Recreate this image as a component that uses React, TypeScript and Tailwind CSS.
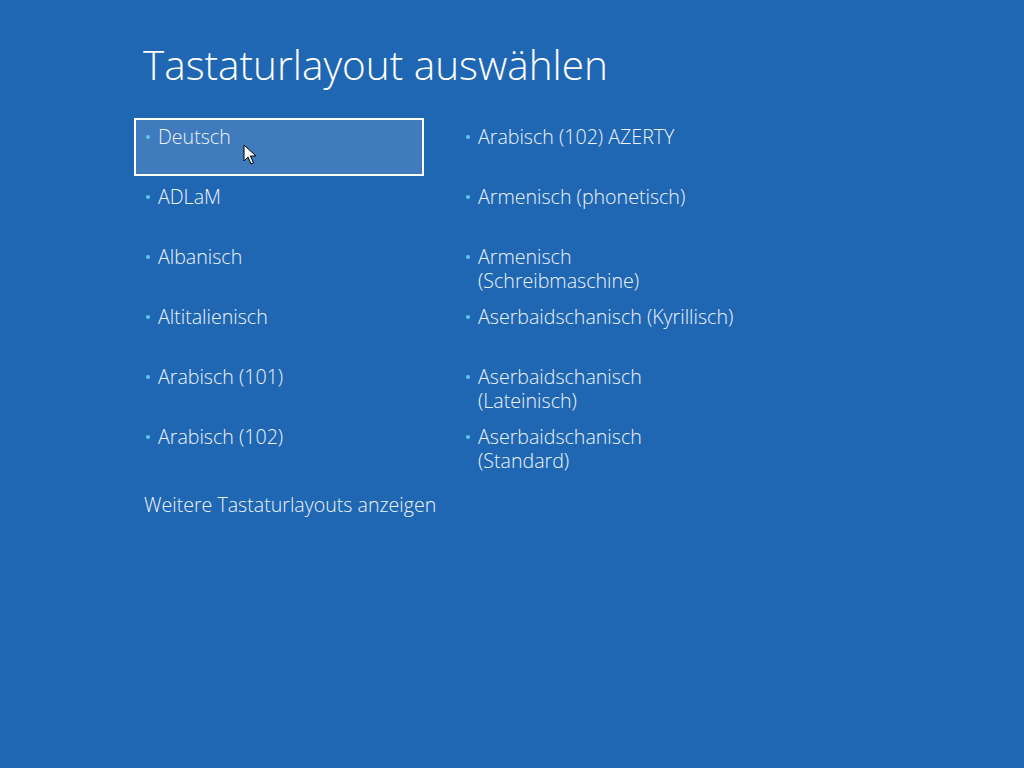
import React from "react";

const left = [
  ["Deutsch"],
  ["ADLaM"],
  ["Albanisch"],
  ["Altitalienisch"],
  ["Arabisch (101)"],
  ["Arabisch (102)"],
];
const right = [
  ["Arabisch (102) AZERTY"],
  ["Armenisch (phonetisch)"],
  ["Armenisch", "(Schreibmaschine)"],
  ["Aserbaidschanisch (Kyrillisch)"],
  ["Aserbaidschanisch", "(Lateinisch)"],
  ["Aserbaidschanisch", "(Standard)"],
];

function Item({ lines, selected }: { lines: string[]; selected?: boolean }) {
  return (
    <div
      className={
        "relative h-[58px] w-[290px] border-2 pt-[5px] pl-[10px] pr-2 " +
        (selected ? "border-white bg-[#3f7bbd]" : "border-transparent")
      }
    >
      <div className="flex items-start">
        <span className="mt-[10px] mr-[8px] h-[4px] w-[4px] shrink-0 rounded-full bg-[#5bc6ee]" />
        <div className="text-[19.6px] leading-[24px] font-light text-[#eef3fa]">
          {lines.map((l, i) => (
            <div key={i}>{l}</div>
          ))}
        </div>
      </div>
      {selected && (
        <svg
          className="absolute left-[107px] top-[24px]"
          width="14"
          height="22"
          viewBox="0 0 14 22"
        >
          <path
            d="M1 1 L1 17 L5 13 L8 20 L10.5 19 L7.5 12 L13 12 Z"
            fill="white"
            stroke="black"
            strokeWidth="1"
            strokeLinejoin="miter"
          />
        </svg>
      )}
    </div>
  );
}

export default function App() {
  return (
    <div
      className="h-[768px] w-[1024px] bg-[#1f67b3] text-white"
      style={{ fontFamily: '"Open Sans", "Noto Sans", sans-serif' }}
    >
      <div className="pl-[143px] pt-[37px]">
        <h1 className="text-[40.5px] leading-[55px] font-light text-white">
          Tastaturlayout auswählen
        </h1>
      </div>
      <div className="mt-[26px] ml-[134px] flex gap-[30px]">
        <div className="flex flex-col gap-[2px]">
          {left.map((l, i) => (
            <Item key={i} lines={l} selected={i === 0} />
          ))}
        </div>
        <div className="flex flex-col gap-[2px]">
          {right.map((l, i) => (
            <Item key={i} lines={l} />
          ))}
        </div>
      </div>
      <div className="mt-[17px] pl-[144px] text-[19.6px] leading-[24px] font-light text-[#eef3fa]">
        Weitere Tastaturlayouts anzeigen
      </div>
    </div>
  );
}
